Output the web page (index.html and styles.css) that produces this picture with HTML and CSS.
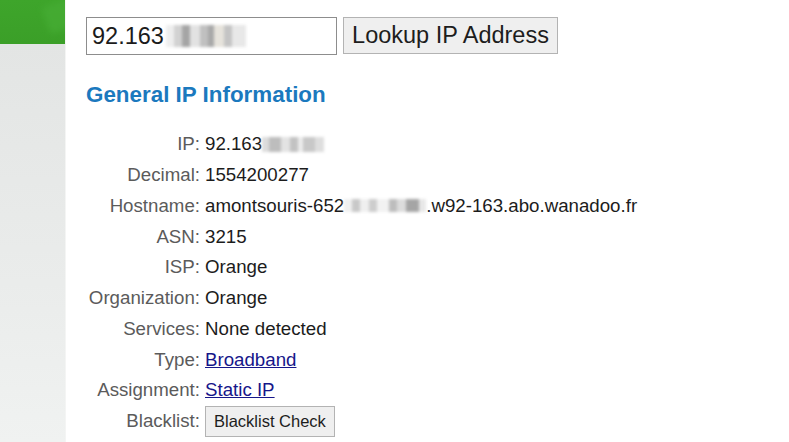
FILE: index.html
```html
<!DOCTYPE html>
<html>
<head>
<meta charset="utf-8">
<link rel="stylesheet" href="styles.css">
</head>
<body>
<div class="page">
  <aside class="sidebar">
    <div class="brand"><div class="brand-shape"></div></div>
    <div class="rail"></div>
  </aside>
  <main class="main">
    <form class="lookup">
      <div class="ip-input">92.163<span class="blur blur-input"></span></div>
      <button type="button" class="lookup-btn">Lookup IP Address</button>
    </form>
    <h2 class="heading">General IP Information</h2>
    <div class="info">
      <div class="label">IP:</div>
      <div class="value">92.163<span class="blur blur-ip"></span></div>
      <div class="label">Decimal:</div>
      <div class="value">1554200277</div>
      <div class="label">Hostname:</div>
      <div class="value">amontsouris-652<span class="blur blur-host"></span>.w92-163.abo.wanadoo.fr</div>
      <div class="label">ASN:</div>
      <div class="value">3215</div>
      <div class="label">ISP:</div>
      <div class="value">Orange</div>
      <div class="label">Organization:</div>
      <div class="value">Orange</div>
      <div class="label">Services:</div>
      <div class="value">None detected</div>
      <div class="label">Type:</div>
      <div class="value"><a href="#">Broadband</a></div>
      <div class="label">Assignment:</div>
      <div class="value"><a href="#">Static IP</a></div>
      <div class="label">Blacklist:</div>
      <div class="value"><button type="button" class="small-btn">Blacklist Check</button></div>
    </div>
  </main>
</div>
</body>
</html>
```
FILE: styles.css
```css
html, body {
  margin: 0;
  padding: 0;
  background: #ffffff;
  font-family: "Liberation Sans", Arial, sans-serif;
}
.page {
  display: flex;
  min-height: 442px;
  overflow: hidden;
}
.sidebar {
  width: 65px;
  flex: 0 0 65px;
  display: flex;
  flex-direction: column;
  border-right: 1px solid #f4f5f4;
}
.brand {
  height: 44px;
  background: linear-gradient(180deg, #3ea52b 0%, #3b9f28 100%);
  position: relative;
  overflow: hidden;
}
.brand-shape {
  position: absolute;
  right: -10px;
  top: 2px;
  width: 30px;
  height: 28px;
  background: #47ae35;
  transform: rotate(-20deg);
  border-radius: 4px;
  filter: blur(3px);
  opacity: 0.7;
}
.rail {
  flex: 1;
  background: linear-gradient(180deg, #e3e5e4 0%, #eaeceb 60%, #f0f2f1 100%);
}
.main {
  flex: 1;
  padding: 17px 0 0 20px;
}
.lookup {
  display: flex;
  gap: 6px;
  margin: 0;
}
.ip-input {
  width: 244px;
  height: 36px;
  border: 1px solid #8d8d8d;
  padding: 0 0 0 5px;
  font-size: 23.5px;
  line-height: 36px;
  color: #1b1b1b;
  display: flex;
  align-items: center;
}
.lookup-btn {
  height: 37px;
  width: 215px;
  background: #efefef;
  border: 1px solid #b3b3b3;
  font-family: "Liberation Sans", Arial, sans-serif;
  font-size: 23.5px;
  color: #1d1d1d;
  padding: 0;
}
.heading {
  margin: 24px 0 0 0;
  font-size: 22.4px;
  line-height: 32px;
  font-weight: bold;
  color: #1b79be;
}
.info {
  display: grid;
  grid-template-columns: 114px auto;
  column-gap: 5px;
  grid-auto-rows: 30.75px;
  margin-top: 18px;
  font-size: 18.7px;
  align-items: center;
}
.label {
  text-align: right;
  color: #5b5b5b;
}
.value {
  color: #1c1c1c;
  white-space: nowrap;
  display: flex;
  align-items: center;
}
.value a {
  color: #16168a;
  text-decoration: underline;
}
.small-btn {
  height: 31px;
  padding: 0 8px;
  background: #efefef;
  border: 1px solid #b3b3b3;
  font-family: "Liberation Sans", Arial, sans-serif;
  font-size: 16.5px;
  color: #1d1d1d;
}
.blur {
  display: inline-block;
  filter: blur(1.5px);
}
.blur-input {
  width: 80px;
  height: 22px;
  margin-left: 2px;
  background: linear-gradient(90deg, #eeeeee 0 10%, #d2d2d2 10% 20%, #a5a5a5 20% 30%, #e2e2e2 30% 42%, #c0c0c0 42% 52%, #a8a8a8 52% 60%, #e6e3dc 60% 72%, #c4c4c4 72% 82%, #e8e8e8 82% 100%);
}
.blur-ip {
  width: 62px;
  height: 15px;
  background: linear-gradient(90deg, #dcdcdc 0 12%, #bdbdbd 12% 30%, #e3e3e3 30% 45%, #c2c2c2 45% 58%, #ececec 58% 66%, #c8c8c8 66% 85%, #dedede 85% 100%);
}
.blur-host {
  width: 82px;
  height: 13px;
  background: linear-gradient(90deg, #f0f0f0 0 10%, #c8c8c8 10% 20%, #efefef 20% 30%, #cdcdcd 30% 40%, #f2f2f2 40% 55%, #bdbdbd 55% 65%, #dcdcdc 65% 75%, #a5a5a5 75% 92%, #e8e8e8 92% 100%);
}
```
